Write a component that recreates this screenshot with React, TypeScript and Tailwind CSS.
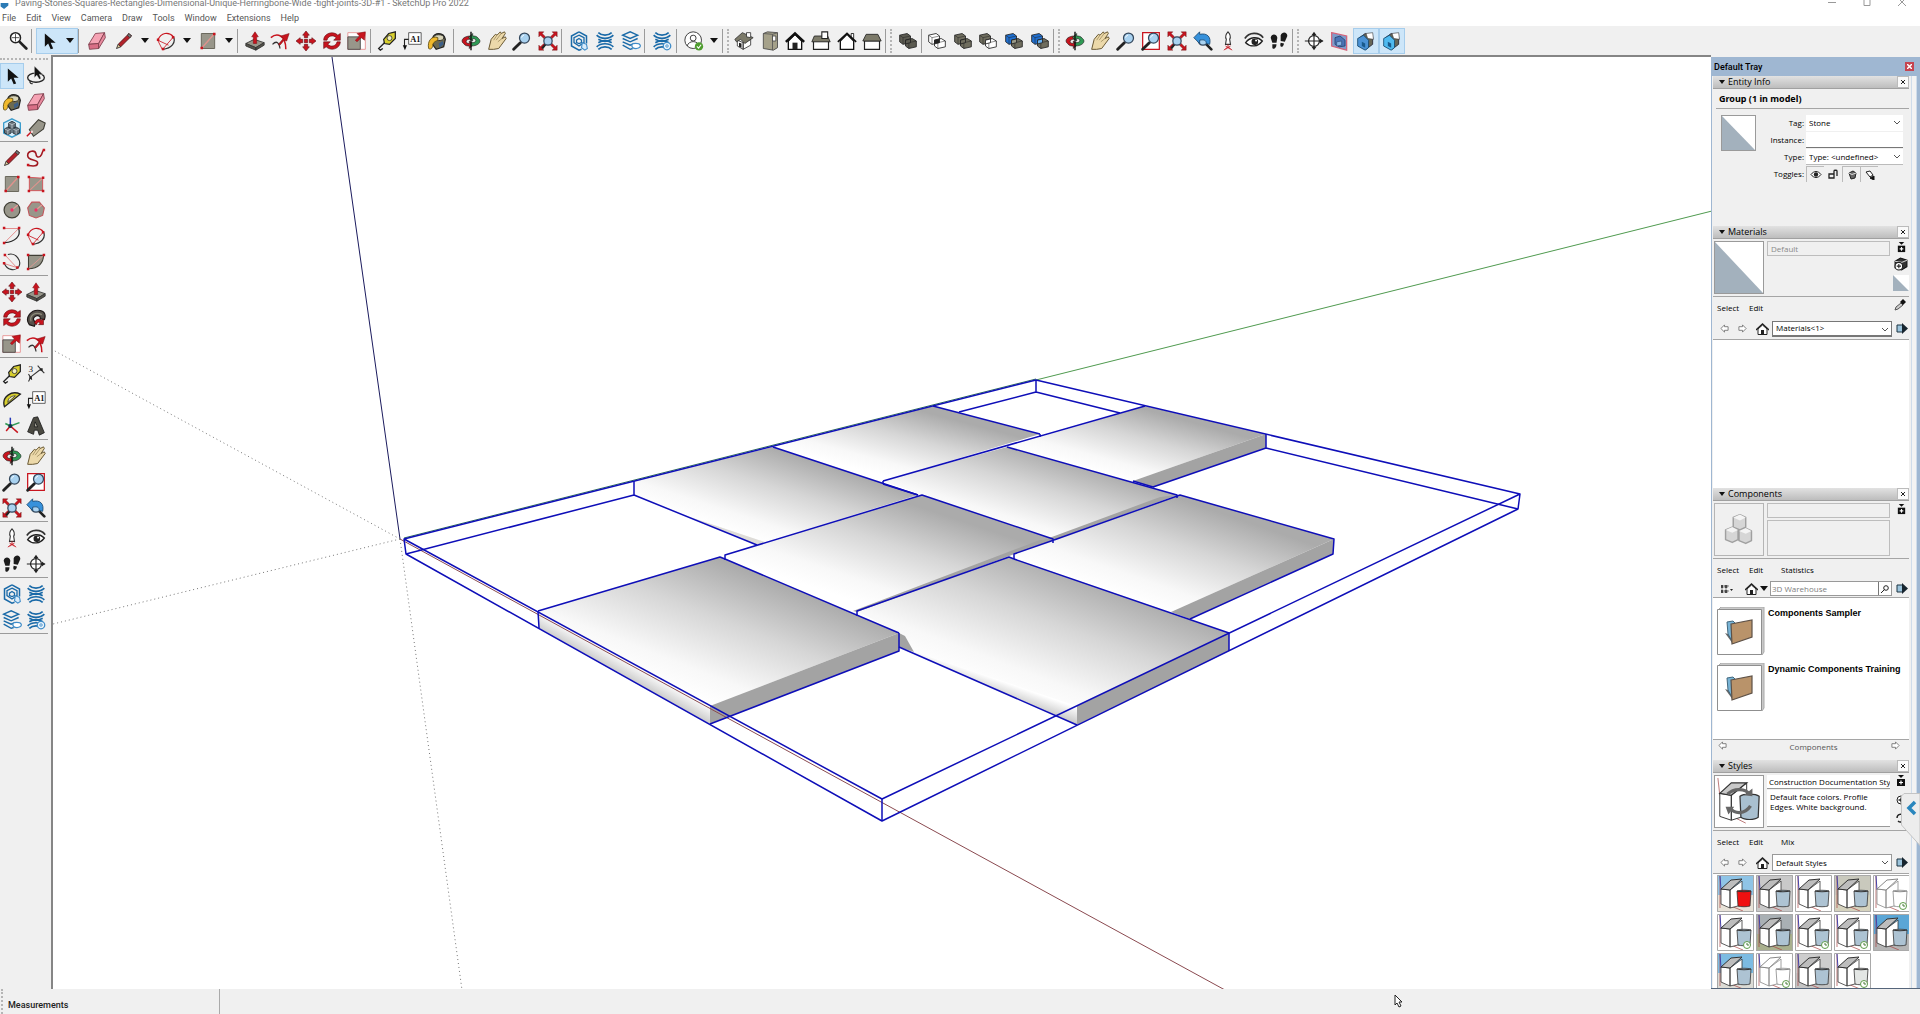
import React from 'react'
import clsx from 'clsx'

const menus = ['File', 'Edit', 'View', 'Camera', 'Draw', 'Tools', 'Window', 'Extensions', 'Help']

const red = '#c8141e'
const stone = '#98968a'
const blue = '#1a6aa8'

const lens = (
  <>
    <path d="M2 22L10 14" stroke="#222" strokeWidth="3.4" strokeLinecap="round" />
    <circle cx="15" cy="8.500" r="6" fill="#a9d2f0" stroke="#33475c" strokeWidth="1.500" />
    <path d="M11.500 8a3.500 3.500 0 013-3" stroke="#fff" fill="none" />
  </>
)

const waves = (
  <path
    d="M4 2c4 4 12 4 16 0M2 5c5 5 15 5 20 0M4 10c5 3 11 3 16 0M4 14c5-3 11-3 16 0M2 19c5-5 15-5 20 0M4 22c4-4 12-4 16 0"
    fill="none"
    stroke={blue}
    strokeWidth="2"
  />
)

const gear = (
  <>
    <circle cx="18" cy="18" r="4.500" fill="#eaf4fc" stroke="#3f8cc8" strokeWidth="1.500" />
    <circle cx="18" cy="18" r="1.500" fill="none" stroke="#3f8cc8" />
  </>
)

const corners = (
  <path
    d="M1 1h6L5 3l4 4-2 2-4-4-2 2zM23 1h-6l2 2-4 4 2 2 4-4 2 2zM1 23h6l-2-2 4-4-2-2-4 4-2-2zM23 23h-6l2-2-4-4 2-2 4 4 2-2z"
    fill={red}
    stroke="#5a1010"
    strokeWidth=".5"
  />
)

function solids(a: string, b: string, mid: string) {
  return (
    <>
      <path d="M2 5l9-2 4 3v8l-9 2-4-3z" fill={a} stroke="#222" />
      <path d="M2 5l4 3 9-2M6 8v8" stroke="#222" strokeWidth=".6" />
      <path d="M9 11l8-2 5 3v7l-9 2-4-3z" fill={b} stroke="#222" />
      <path d="M9 11l4 3 9-2M13 14v7" stroke="#222" strokeWidth=".6" />
      <path d="M9 11l6-1.500V14l-6 1.500z" fill={mid} stroke="#222" />
    </>
  )
}

function sectionHouse(fill: string) {
  return (
    <>
      <path d="M3 9l8-6 9 4v9l-8 6-9-4z" fill="#666657" stroke="#223" />
      <path d="M12 3l8-1 1 8-7-1z" fill="#fff" stroke="#333" strokeWidth=".7" />
      <path d="M2 9l7-4 6 6v9l-4 3-9-5z" fill={fill} stroke="#164a70" />
      <path d="M7 13l4 2v5l-4-2z" fill="#195a8c" />
    </>
  )
}

const icons: Record<string, React.ReactNode> = {
  search: (
    <>
      <circle cx="9" cy="8" r="6" fill="#fff" stroke="#222" strokeWidth="1.800" />
      <path d="M9 3.500v9M4.500 8h9" stroke="#222" strokeWidth=".9" />
      <path d="M14 13l8 8" stroke="#222" strokeWidth="3.200" strokeLinecap="round" />
    </>
  ),
  select: <path d="M7 3v16l4-4 3 7 3-1-3-7h6z" fill="#111" />,
  lasso: (
    <>
      <ellipse cx="12" cy="14" rx="10" ry="5.500" fill="none" stroke="#222" strokeWidth="1.600" />
      <path d="M5 18c-1 2 1 4 3 3" fill="none" stroke="#222" strokeWidth="1.400" />
      <path d="M10 0v14l3-3 3 5 2-1-2-5h4z" fill="#111" stroke="#f0f0f0" strokeWidth=".5" />
    </>
  ),
  eraser: (
    <>
      <path d="M2 16L10 3l11-1-7 13z" fill="#f5a3b4" stroke="#7b3a48" />
      <path d="M2 16l12-1v6L3 22z" fill="#d96f86" stroke="#7b3a48" />
      <path d="M14 15l7-13 1 6-8 13z" fill="#e88a9e" stroke="#7b3a48" />
    </>
  ),
  pencil: (
    <>
      <path d="M5 16L18 3l3 3L8 19z" fill="#b3222a" stroke="#4e0d10" />
      <path d="M5 16l3 3-5 2z" fill="#e9cd9c" stroke="#222" />
      <path d="M16 5l2-2 3 3-2 2z" fill="#777" stroke="#333" />
    </>
  ),
  arc: (
    <>
      <path d="M2 11C6 2 15 0 21 7" fill="none" stroke={red} strokeWidth="1.400" />
      <path d="M2 11l6 12M21 7L8 22M2 11l13 6" stroke={red} fill="none" />
      <path d="M21 7c3 7-2 14-13 15" fill="none" stroke="#333" strokeWidth="1.500" />
      <path d="M1 9h3v3H1zM19 6h3v3h-3zM7 20h3v3H7z" fill={red} />
    </>
  ),
  rect: (
    <>
      <path d="M4 3h16v18H4z" fill={stone} stroke="#6b695d" strokeWidth="1.200" />
      <path d="M4 21L20 3" stroke="#e0938d" strokeWidth="1.600" />
      <path d="M3 19h3v3H3zM18 2h3v3h-3z" fill={red} />
    </>
  ),
  rotRect: (
    <>
      <path d="M4 4l16 1v15H4z" fill={stone} stroke="#d8444c" />
      <path d="M4 20L20 5" stroke="#e0938d" strokeWidth="1.300" />
      <path d="M2 2h3v3H2zM19 3h3v3h-3zM2 19h3v3H2zM19 19h3v3h-3z" fill={red} />
    </>
  ),
  circle: (
    <>
      <circle cx="12" cy="12" r="9.500" fill={stone} stroke="#403f36" strokeWidth="1.500" />
      <path d="M12 12l7-6" stroke="#e49a94" strokeWidth="1.500" />
      <circle cx="12" cy="12" r="2" fill="#e36" />
    </>
  ),
  polygon: (
    <>
      <path d="M7 2.500h9l6 7-2 9-8 3-8-3-2-9z" fill={stone} stroke="#c2555b" strokeWidth="1.300" />
      <path d="M12 12l7-6" stroke="#e49a94" strokeWidth="1.500" />
      <circle cx="12" cy="12" r="2" fill="#e36" />
    </>
  ),
  arc2: (
    <>
      <path d="M20 3c3 9-4 16-17 17" fill="none" stroke="#222" strokeWidth="1.500" />
      <path d="M3 3h17M20 3L3 20" stroke="#e07a7a" fill="none" />
      <path d="M1 1h3v3H1zM19 1h3v3h-3zM1 19h3v3H1z" fill={red} />
    </>
  ),
  arc3: (
    <>
      <path d="M7 3c10-3 17 8 13 15-5 6-14 3-17-4" fill="none" stroke="#333" strokeWidth="1.400" />
      <path d="M4 4l13 14M3 14l16 5" stroke="#e07a7a" fill="none" />
      <path d="M2 2h3v3H2zM17 17h3v3h-3zM1 12h3v3H1z" fill={red} />
    </>
  ),
  pie: (
    <>
      <path d="M3 4h18c0 9-6 16-18 16z" fill={stone} stroke="#403f36" strokeWidth="1.300" />
      <path d="M3 20L21 4" stroke="#e49a94" />
      <path d="M1 2h3v3H1zM20 2h3v3h-3zM1 19h3v3H1z" fill={red} />
    </>
  ),
  freehand: (
    <>
      <path
        d="M3 21c6 1 11 1 11-3 0-5-12-2-12-9 0-6 9-7 10-2 0 3 2 5 5 3 4-3 1-6 5-8"
        fill="none"
        stroke="#a01820"
        strokeWidth="1.900"
      />
      <path d="M1 19h3v3H1zM20 1h3v3h-3z" fill={red} />
    </>
  ),
  push: (
    <>
      <path d="M1 15l10-5 12 4-10 6z" fill={stone} stroke="#333" />
      <path d="M1 15v3l12 5v-3zM13 20v3l10-6v-3z" fill="#55534a" stroke="#333" />
      <path d="M12 1l4 6h-2v8h-4V7H8z" fill={red} stroke="#7a0d12" strokeWidth=".6" />
    </>
  ),
  offset: (
    <>
      <path d="M1 8C8 2 19 4 19 22" fill="none" stroke={red} strokeWidth="1.800" />
      <path d="M3 16c5-5 8-2 9 5" fill="none" stroke="#333" strokeWidth="1.500" />
      <path d="M10 16l6-7-3-3 10-3-3 9-3-1-5 6z" fill={red} stroke="#7a0d12" strokeWidth=".6" />
    </>
  ),
  move: (
    <path
      d="M12 0l4 5h-2v3h-4V5H8zM12 24l4-5h-2v-3h-4v3H8zM0 12l5-4v2h3v4H5v2zM24 12l-5-4v2h-3v4h3v2zM10 10h4v4h-4z"
      fill={red}
      stroke="#5e0b10"
      strokeWidth=".7"
    />
  ),
  rotate: (
    <path
      d="M2 11C2 3 13-1 19 5l3-2v8h-8l3-3c-4-4-10-2-11 3zM22 13c0 8-11 12-17 6l-3 2v-8h8l-3 3c4 4 10 2 11-3z"
      fill={red}
      stroke="#5e0b10"
      strokeWidth=".7"
    />
  ),
  scale: (
    <>
      <path d="M1 2h21v20H1z" fill="#fff" stroke="#e58a8a" />
      <path d="M1 7h15v15H1z" fill={stone} stroke="#444" />
      <path d="M10 11l5-5-3-3 10-2-1 10-4-3-5 5z" fill={red} stroke="#7a0d12" strokeWidth=".6" />
    </>
  ),
  tape: (
    <>
      <path d="M8 10l6-7 8-2v8l-7 7-6-1z" fill="#d8cf2e" stroke="#222" strokeWidth="1.500" />
      <circle cx="15" cy="8.500" r="3" fill="#f3f0bc" stroke="#333" />
      <path d="M9 14l-7 7 2 2 3-2" fill="none" stroke="#222" strokeWidth="1.600" />
    </>
  ),
  text: (
    <>
      <path d="M8 2h15v14H8z" fill="#fff" stroke="#444" />
      <text x="10" y="13" fontSize="10" fontFamily="Liberation Serif, serif" fontWeight="700" fill="#111">
        A1
      </text>
      <path d="M8 10H3v9" fill="none" stroke="#222" strokeWidth="1.300" />
      <path d="M1 17h5l-2.500 6z" fill="#111" />
    </>
  ),
  paint: (
    <>
      <path d="M7 8c1-6 13-8 15 2l-2 9-9 3-5-7z" fill="#6d6a50" stroke="#222" strokeWidth="1.500" />
      <ellipse cx="14" cy="8" rx="6" ry="3.500" fill="#d8d4b8" stroke="#222" />
      <path d="M13 8C6 5 0 12 2 21c3 2 5-1 5-5 1-3 4-4 6-5z" fill="#f0b92d" stroke="#5b4a12" />
      <path d="M14 15l5-3 1 4-5 4z" fill="#3d5f88" />
    </>
  ),
  orbit: (
    <>
      <path
        d="M12 6C2 6-1 12 3 15c2 3 5 3 7 3v3l5-5-5-4v3c-3 0-5-2-3-4 1-1 3-1 5-1z"
        fill={red}
        stroke="#222"
        strokeWidth=".8"
      />
      <path
        d="M12 18c10 0 13-6 9-9-2-3-5-3-7-3V3L9 8l5 4V9c3 0 5 2 3 4-1 1-3 1-5 1z"
        fill="#2f9a55"
        stroke="#222"
        strokeWidth=".8"
      />
      <path d="M12 1v22" stroke="#111" strokeWidth="1.700" />
    </>
  ),
  pan: (
    <>
      <path
        d="M2 22l3-12 5-6 2 1 4-4 1 2 4-2 1 2-4 6 4-2 1 2-6 8-3 4-6 1z"
        fill="#ecd9aa"
        stroke="#6a5a35"
        strokeWidth="1.200"
        strokeLinejoin="round"
      />
      <path d="M12 5l-4 6M17 3l-6 8M18 9l-5 4" stroke="#8f7d50" strokeWidth=".8" />
    </>
  ),
  zoom: lens,
  zoomWindow: (
    <>
      <path d="M2 2h20v20H2z" fill="#fff" stroke={red} strokeWidth="1.500" />
      {lens}
    </>
  ),
  extents: (
    <>
      {corners}
      <path d="M5 21l4-5" stroke="#222" strokeWidth="2.500" />
      <circle cx="12" cy="12" r="5" fill="#a9d2f0" stroke="#33475c" strokeWidth="1.500" />
    </>
  ),
  previous: (
    <>
      <path d="M14 14l8 8" stroke="#222" strokeWidth="3.200" strokeLinecap="round" />
      <circle cx="12" cy="11" r="6" fill="#a9d2f0" stroke="#33475c" strokeWidth="1.500" />
      <path d="M1 8l7-7v3c9-2 14 3 12 12l-4-1c0-4-3-5-8-4v4z" fill="#3691db" stroke="#17466f" />
    </>
  ),
  warehouse: (
    <>
      <path d="M12 1l9 5v9M15 22l-3 1-9-5V6l9-5" fill="none" stroke={blue} strokeWidth="1.800" />
      <path d="M12 5l6 3v6l-6 4-6-4V8z" fill="none" stroke={blue} strokeWidth="1.600" />
      <path d="M12 9l3 2v3l-3 1-3-1v-3z" fill="none" stroke={blue} strokeWidth="1.500" />
      <path d="M16 14l5 2 1 5-3 2-4-3z" fill="#d8ebfa" stroke="#3f8cc8" strokeWidth="1.300" />
    </>
  ),
  extWarehouse: waves,
  layout: (
    <>
      <path
        d="M2 5l9-4 9 4-9 4zM2 9l9 4 9-4M2 13l9 4 5-2M2 17l9 5 3-1"
        fill="none"
        stroke={blue}
        strokeWidth="1.700"
      />
      <path d="M13 17c0-3 9-3 10 0s-3 4-5 4-5-1-5-4z" fill="#fff" stroke="#3f8cc8" strokeWidth="1.500" />
    </>
  ),
  extManager: (
    <>
      {waves}
      {gear}
    </>
  ),
  user: (
    <>
      <circle cx="11" cy="11" r="10" fill="#fff" stroke="#444" strokeWidth="1.200" />
      <circle cx="11" cy="8.500" r="3.500" fill="none" stroke="#444" strokeWidth="1.200" />
      <path d="M4 18c1-7 13-7 14 0" fill="none" stroke="#444" strokeWidth="1.200" />
      <circle cx="18" cy="18.500" r="5" fill="#4f9d2f" />
      <path d="M15.500 18.500l2 2 3-4" fill="none" stroke="#fff" strokeWidth="1.300" />
    </>
  ),
  iso: (
    <>
      <path d="M4 11l7 3v8l-7-4zM11 14l9-4v7l-9 5z" fill="#fff" stroke="#333" />
      <path d="M1 10l9-8 13 6-10 7-5-5-5 3z" fill="#7c7a69" stroke="#333" />
      <path d="M15 2h5v6l-5-1z" fill="#fff" stroke="#333" />
      <path d="M6 14l3 1v5l-3-1z" fill="#222" />
    </>
  ),
  top: (
    <>
      <path d="M4 3l5-2 12 1v18l-5 3-12-2z" fill="#a5a18a" stroke="#444" />
      <path d="M15 4v19M4 3l11 1 6-2" stroke="#555" fill="none" />
      <path d="M15 6h4v6h-4z" fill="#fff" stroke="#444" />
    </>
  ),
  front: (
    <>
      <path d="M4 12v10h16V12l-8-8z" fill="#fff" stroke="#111" strokeWidth="1.600" />
      <path d="M1 13L12 3l11 10" fill="none" stroke="#111" strokeWidth="3" />
      <path d="M9 14h6v8H9z" fill="#222" />
    </>
  ),
  right: (
    <>
      <path d="M3 12h18v10H3z" fill="#fff" stroke="#222" strokeWidth="1.400" />
      <path d="M4 6h16l3 7H1z" fill="#7c7a69" stroke="#222" />
      <path d="M13 1h7v8h-7z" fill="#fff" stroke="#222" strokeWidth="1.300" />
    </>
  ),
  back: (
    <>
      <path d="M17 3h3v6h-3z" fill="#fff" stroke="#111" />
      <path d="M4 12v10h16V12l-8-8z" fill="#fff" stroke="#111" strokeWidth="1.600" />
      <path d="M1 13L12 3l11 10" fill="none" stroke="#111" strokeWidth="2" />
    </>
  ),
  left: (
    <>
      <path d="M3 12h18v10H3z" fill="#fff" stroke="#222" strokeWidth="1.400" />
      <path d="M5 4h14l4 8H1z" fill="#7c7a69" stroke="#222" />
    </>
  ),
  shell: solids('#5c5b51', '#5c5b51', '#5c5b51'),
  intersect: solids('#fff', '#fff', '#222'),
  union: solids('#6f6d5e', '#6f6d5e', '#6f6d5e'),
  subtract: solids('#6f6d5e', '#fff', '#fff'),
  trim: solids('#1f6fd0', '#6f6d5e', '#9a9a88'),
  split: solids('#1f6fd0', '#6f6d5e', '#68b2f2'),
  position: (
    <>
      <path d="M12 1c-3 3-3 7-2 9l-1 6h6l-1-6c1-2 1-6-2-9z" fill="#fff" stroke="#333" strokeWidth="1.300" />
      <path d="M12 16v3M7 23l5-4 5 4M9 18l6 4M15 18l-6 4" stroke={red} fill="none" />
    </>
  ),
  look: (
    <>
      <path d="M1 9C6 1 18 1 23 8" fill="none" stroke="#333" strokeWidth="2" />
      <path d="M2 14c5-7 14-8 20-2-5 7-14 8-20 2z" fill="#fff" stroke="#222" strokeWidth="1.600" />
      <circle cx="13" cy="13" r="4" fill="#222" />
      <circle cx="14.500" cy="11.500" r="1.200" fill="#fff" />
    </>
  ),
  walk: (
    <>
      <path d="M2 8c1-5 7-5 8 0l-1 6H4zM4 16h5c0 5-4 7-5 4z" fill="#1b1b1b" />
      <path d="M14 5c2-5 8-4 8 1l-3 7-5-1zM14 14l4 1c-1 6-6 5-4-1z" fill="#1b1b1b" />
    </>
  ),
  section: (
    <>
      <circle cx="12" cy="12" r="6.500" fill="#fff" stroke="#222" strokeWidth="1.500" />
      <path d="M1 12h22M12 5v14" stroke="#222" strokeWidth="1.400" />
      <path d="M9 5l3-4 3 4zM9 19l3 4 3-4zM19 9l4 3-4 3z" fill="#222" />
    </>
  ),
  plane: (
    <>
      <path d="M2 2l18 4v17L2 18z" fill="#7d9ccb" stroke="#d4637a" strokeWidth="1.500" />
      <path d="M6 8l6-2 6 5v7l-7 1-5-3z" fill="#4a74b6" stroke="#27426f" />
      <path d="M8 13l6-1v5l-6 1z" fill="#86b5e4" stroke="#27426f" strokeWidth=".7" />
    </>
  ),
  sectionCut: sectionHouse('#4b93d6'),
  sectionFill: sectionHouse('#4fbaf0'),
  component: (
    <>
      <path d="M12 1l10 5v12l-10 5-10-5V6z" fill="#d9effb" stroke="#3b9ccc" strokeWidth="1.600" />
      <path
        d="M8 6l4-2 4 2v5l-4 2-4-2zM3 13l4-2 4 2v5l-4 2-4-2zM13 13l4-2 4 2v5l-4 2-4-2z"
        fill="#68727a"
        stroke="#1f2a33"
      />
      <path
        d="M8 6l4 2 4-2M3 13l4 2 4-2M13 13l4 2 4-2M12 8v5M7 15v5M17 15v5"
        stroke="#d5dde3"
        strokeWidth=".8"
        fill="none"
      />
    </>
  ),
  tag: (
    <>
      <path d="M4 14L15 2l8 4-2 7-12 9z" fill={stone} stroke="#3d3c33" strokeWidth="1.300" />
      <path d="M1 22l6-6" stroke={red} strokeWidth="1.800" />
      <circle cx="7" cy="16.500" r="1.500" fill="#f0d9d9" />
    </>
  ),
  follow: (
    <>
      <path
        d="M4 20C-2 12 6 1 17 3c6 1 7 6 5 11l-5-1c1-4-4-5-7-2-2 2-1 5 2 6l-2 5z"
        fill="#55504a"
        stroke="#1c1616"
        strokeWidth="1.400"
      />
      <path d="M6 16C4 9 11 4 19 8" fill="none" stroke="#8d8b7a" strokeWidth="1.500" />
      <path d="M10 18c2-5 6-6 9-3l2-2v7h-6l2-2c-2-2-4-1-4 2z" fill={red} stroke="#400" strokeWidth=".6" />
    </>
  ),
  dimension: (
    <>
      <path d="M5 16L18 6M3 12l4 7M14 2l7 8M5 17l-2 4M18 7l4 4" stroke="#333" strokeWidth="1.300" fill="none" />
      <path d="M4 15h3v3H4zM17 5h3v3h-3z" fill="#222" />
      <text x="3" y="10" fontSize="11" fontFamily="Liberation Serif, serif" fill="#222">
        3
      </text>
    </>
  ),
  protractor: (
    <>
      <path d="M3 20C-1 8 12 0 22 5z" fill="#d8cf2e" stroke="#222" strokeWidth="1.600" />
      <path d="M7 15c0-5 4-8 9-8z" fill="#f4f2c8" stroke="#333" />
    </>
  ),
  axes: (
    <>
      <path d="M10 12V2" stroke="#2438b8" strokeWidth="1.800" />
      <path d="M10 12l11-4M10 12l-6-3" stroke="#2f9a55" strokeWidth="1.800" />
      <path d="M10 12l9 8M10 12l-5 6" stroke={red} strokeWidth="1.800" />
      <circle cx="10" cy="12" r="2.500" fill="#134" />
    </>
  ),
  text3d: (
    <>
      <path d="M2 19L9 2l5-1 8 19-6 3-2-6h-4l-1 5z" fill="#4b4a42" stroke="#1b1b1b" />
      <path d="M10 13l1-6 3 6z" fill="#b5b3a4" stroke="#1b1b1b" />
    </>
  ),
}

function Icon({ name, className = 'size-5' }: { name: string; className?: string }) {
  return (
    <svg aria-hidden="true" className={clsx('shrink-0', className)} viewBox="0 0 24 24" fill="none">
      {icons[name]}
    </svg>
  )
}

function ToolButton({ name, active, className }: { name: string; active?: boolean; className?: string }) {
  return (
    <button
      type="button"
      aria-label={name}
      className={clsx(
        'flex h-[26px] items-center justify-center',
        active && 'bg-[#cde6f9] outline outline-1 -outline-offset-1 outline-[#a6cdec]',
        className
      )}
    >
      <Icon name={name} />
    </button>
  )
}

function Caret({ className = 'w-4' }: { className?: string }) {
  return (
    <button
      type="button"
      aria-label="More"
      className={clsx('flex h-[26px] items-center justify-center', className)}
    >
      <svg aria-hidden="true" className="h-[5px] w-2" viewBox="0 0 8 5">
        <path d="M0 0h8L4 5z" fill="#111" />
      </svg>
    </button>
  )
}

function Group({ names, active = [], className }: { names: string[]; active?: string[]; className?: string }) {
  return (
    <div className={clsx('flex h-6 shrink-0 items-center border-[#9b9b9b]', className)}>
      {names.map((name) => (
        <ToolButton key={name} name={name} active={active.includes(name)} className="flex-1" />
      ))}
    </div>
  )
}

function Grip() {
  return <span className="ml-1 h-6 w-1 shrink-0 border-l-2 border-dotted border-[#b5b5b5]" />
}

function Split({ name }: { name: string }) {
  return (
    <div className="flex">
      <ToolButton name={name} className="w-[26px]" />
      <Caret />
    </div>
  )
}

function TopToolbar() {
  return (
    <div className="flex h-[29px] items-center overflow-hidden bg-[#f0f0f0]">
      <Group names={['search']} className="w-8 border-r pl-1" />
      <div className="flex h-6 w-[47px] shrink-0 items-center border-r border-[#9b9b9b] pl-1">
        <div className="flex bg-[#cde6f9] outline outline-1 -outline-offset-1 outline-[#a6cdec]">
          <ToolButton name="select" className="w-[26px]" />
          <Caret />
        </div>
      </div>
      <div className="flex h-6 w-[159px] shrink-0 items-center border-r border-[#9b9b9b] pl-1">
        <ToolButton name="eraser" className="w-7" />
        <Split name="pencil" />
        <Split name="arc" />
        <Split name="rect" />
      </div>
      <Group names={['push', 'offset', 'move', 'rotate', 'scale']} className="w-[133px] border-r pl-1" />
      <Group names={['tape', 'text', 'paint']} className="w-[83px] border-r px-1" />
      <Group names={['orbit', 'pan', 'zoom', 'extents']} className="w-[108px] border-r pl-1" />
      <Group names={['warehouse', 'extWarehouse', 'layout']} className="w-[83px] border-r pl-1" />
      <Group names={['extManager']} className="w-8 border-r pl-0.5" />
      <div className="flex h-6 w-[46px] shrink-0 items-center border-r border-[#9b9b9b] pl-1">
        <ToolButton name="user" className="w-[26px]" />
        <Caret />
      </div>
      <Grip />
      <Group names={['iso', 'top', 'front', 'right', 'back', 'left']} className="w-[155px] border-r" />
      <Grip />
      <Group names={['shell']} className="w-7 border-r" />
      <Group names={['intersect', 'union', 'subtract', 'trim', 'split']} className="w-[132px] border-r pl-0.5" />
      <Grip />
      <Group
        names={['orbit', 'pan', 'zoom', 'zoomWindow', 'extents', 'previous', 'position', 'look', 'walk']}
        className="w-[231px] border-r"
      />
      <Grip />
      <Group
        names={['section', 'plane', 'sectionCut', 'sectionFill']}
        active={['sectionCut', 'sectionFill']}
        className="w-[104px]"
      />
    </div>
  )
}

const sideGroups = [
  ['select', 'lasso', 'paint', 'eraser', 'component', 'tag'],
  ['pencil', 'freehand', 'rect', 'rotRect', 'circle', 'polygon', 'arc2', 'arc', 'arc3', 'pie'],
  ['move', 'push', 'rotate', 'follow', 'scale', 'offset'],
  ['tape', 'dimension', 'protractor', 'text', 'axes', 'text3d'],
  ['orbit', 'pan', 'zoom', 'zoomWindow', 'extents', 'previous'],
  ['position', 'look', 'walk', 'section'],
  ['warehouse', 'extWarehouse', 'layout', 'extManager'],
]

function SideToolbar() {
  return (
    <aside className="w-[51px] shrink-0 bg-[#f0f0f0] pt-[3px]">
      <div className="mb-[3px] w-12 border-t-2 border-dotted border-[#b5b5b5]" />
      {sideGroups.map((group, i) => (
        <div key={i} className="mb-[3px] grid w-12 grid-cols-2 border-b border-[#9b9b9b]">
          {group.map((name) => (
            <ToolButton key={name} name={name} active={name === 'select'} />
          ))}
        </div>
      ))}
    </aside>
  )
}

const tiles = [
  '634,481 773,447 918,495 756,545 634,494',
  '773,447 933,406 1040,434 883,481',
  '1007,447 1145,406 1266,434 1133,481',
  '883,481 1007,447 1177,495 1054,540',
  '725,555 922,495 1053,539 856,611',
  '1014,555 1180,495 1334,539 1171,612',
  '857,611 1009,557 1229,633 1077,706 900,647 914,652 905,636 899,633',
  '538,611 720,557 899,633 710,706',
]

const sides = [
  '1133,481 1266,434 1266,448 1153,487',
  '1171,612 1334,539 1333,554 1190,619',
  '710,706 899,633 899,651 710,724',
  '1077,706 1229,633 1229,651 1077,725',
  '853,611 1040,540 1053,540 857,612',
  '1041,541 1160,497 1177,495 1054,540',
  '899,633 905,636 914,652 899,647',
]

const edges = [
  'M404 539L1036 380L1520 494L1518 509L882 821L406 554L404 539L882 799L1520 494',
  'M882 799V821M1036 380V392M1036 392L959 412M1036 392L1120 413',
  'M406 554L634 495V481M634 495L757 545',
  'M773 447L918 495M933 406L1040 434M1040 434V437M883 481L1145 406',
  'M883 481V484M1007 447L1177 495V498M1266 434V448L1153 487M1266 448L1518 509',
  'M1054 540L1180 495L1334 539L1333 554L1190 619',
  'M725 560V555L922 495L1053 539V543M1014 559V554L1054 540',
  'M725 559L899 633M1014 559L1229 633M883 484L918 495M1133 481L1153 487',
  'M538 611L720 557L725 559M899 633V651L710 724M538 611L539 628',
  'M857 616V611L1009 557L1014 559M1229 633V651M899 647L1077 725',
]

function Viewport() {
  return (
    <main className="min-w-0 flex-1 border-l-2 border-t-2 border-[#858585] bg-white">
      <svg
        role="img"
        aria-label="Paving stones model"
        className="block size-full"
        viewBox="53 57 1658 932"
        preserveAspectRatio="xMinYMin slice"
      >
        <defs>
          <linearGradient id="top" x1="0.25" y1="0.78" x2="0.75" y2="0.25">
            <stop offset="0" stopColor="#ffffff" />
            <stop offset="0.2" stopColor="#f8f8f8" />
            <stop offset="0.6" stopColor="#d6d6d6" />
            <stop offset="1" stopColor="#ababab" />
          </linearGradient>
          <linearGradient id="skirtLeft" gradientUnits="userSpaceOnUse" x1="624" y1="658" x2="614" y2="676">
            <stop offset="0" stopColor="#ffffff" />
            <stop offset="1" stopColor="#bdbdbd" />
          </linearGradient>
          <linearGradient id="skirtRight" gradientUnits="userSpaceOnUse" x1="988" y1="676" x2="982" y2="693">
            <stop offset="0" stopColor="#ffffff" />
            <stop offset="1" stopColor="#c0c0c0" />
          </linearGradient>
        </defs>
        <path d="M400 539L332 57" stroke="#1b1b5e" />
        <path d="M1036 380L1712 211" stroke="#4f9a4f" />
        <path d="M400 539L53 350M400 539L53 624M400 539L462 990" stroke="#777" strokeDasharray="1 3" />
        <polygon points="539,611 710,706 710,724 539,628" fill="url(#skirtLeft)" />
        <polygon points="900,647 1077,706 1077,725" fill="url(#skirtRight)" />
        {tiles.map((points) => (
          <polygon key={points} points={points} fill="url(#top)" />
        ))}
        <polygon points="690,517 765,542 757,545" fill="#dedcd8" />
        {sides.map((points) => (
          <polygon key={points} points={points} fill="#a3a3a3" />
        ))}
        <path d="M400 539L1225 990" stroke="#8a4a50" />
        <path d="M404 538L1036 379" stroke="#2b6a5a" />
        {edges.map((d) => (
          <path key={d} d={d} fill="none" stroke="#0e0eb8" strokeWidth="1.500" strokeLinejoin="round" />
        ))}
      </svg>
    </main>
  )
}

function SectionHeader({ title }: { title: string }) {
  return (
    <div className="flex h-[13px] shrink-0 items-center justify-between border-b border-[#a0a0a0] bg-linear-to-b from-[#e2e2e2] to-[#bdbdbd] pl-1.5">
      <h2 className="flex items-center gap-[3px] text-[9px] leading-3 text-black">
        <svg aria-hidden="true" className="h-1 w-1.5" viewBox="0 0 6 4">
          <path d="M0 0h6L3 4z" fill="#111" />
        </svg>
        {title}
      </h2>
      <button
        type="button"
        aria-label={`Close ${title}`}
        className="flex h-3 w-3 items-center justify-center border border-[#bbb] bg-[#fafafa]"
      >
        <svg aria-hidden="true" className="size-1" viewBox="0 0 4 4">
          <path d="M0 0l4 4M4 0L0 4" stroke="#222" />
        </svg>
      </button>
    </div>
  )
}

function Swatch({ className }: { className?: string }) {
  return (
    <svg aria-hidden="true" className={className} viewBox="0 0 10 10" preserveAspectRatio="none">
      <path d="M0 0h10v10H0z" fill="#fff" />
      <path d="M0 0l10 10H0z" fill="#a3b1bd" />
    </svg>
  )
}

function Select({ label, value, className }: { label: string; value: string; className?: string }) {
  return (
    <div className={clsx('relative flex bg-white', className)}>
      <select
        id={label}
        aria-label={label}
        className="h-full w-full appearance-none pl-[3px] pr-3 text-[8px] leading-3 text-black"
      >
        <option>{value}</option>
      </select>
      <svg
        aria-hidden="true"
        className="pointer-events-none absolute right-[3px] top-1.5 h-1 w-1.5"
        viewBox="0 0 6 4"
      >
        <path d="M0 0l3 3 3-3" fill="none" stroke="#555" />
      </svg>
    </div>
  )
}

function Tabs({ names }: { names: string[] }) {
  return (
    <div className="flex h-[22px] shrink-0 items-center border-t border-[#a5a5a5] pl-1 text-[8px] leading-3 text-black">
      {names.map((name) => (
        <button key={name} type="button" className="h-4 w-8 text-left">
          {name}
        </button>
      ))}
    </div>
  )
}

function Arrow({ flip }: { flip?: boolean }) {
  return (
    <button
      type="button"
      aria-label={flip ? 'Forward' : 'Back'}
      className="w-[18px]"
    >
      <svg aria-hidden="true" className={clsx('size-[9px]', flip && 'rotate-180')} viewBox="0 0 10 10">
        <path d="M5 1L1 5l4 4V7h4V3H5z" fill="#fff" stroke="#777" />
      </svg>
    </button>
  )
}

function Home() {
  return (
    <button type="button" aria-label="Home">
      <svg aria-hidden="true" className="h-3 w-[13px]" viewBox="0 0 13 12">
        <path d="M2 6v5.500h9V6L6.500 2z" fill="#fff" stroke="#222" />
        <path d="M0 7l6.500-6L13 7" fill="none" stroke="#222" strokeWidth="1.300" />
        <path d="M5 7h3v5H5z" fill="#222" />
      </svg>
    </button>
  )
}

function Details() {
  return (
    <button type="button" aria-label="Details">
      <svg aria-hidden="true" className="h-[11px] w-3" viewBox="0 0 12 11">
        <path d="M1 2h6v7H1z" fill="#9cc4dc" stroke="#1c3442" />
        <path d="M6 0l6 5.500L6 11z" fill="#16242e" />
      </svg>
    </button>
  )
}

function Monitor({ className = 'size-[11px]' }: { className?: string }) {
  return (
    <svg aria-hidden="true" className={className} viewBox="0 0 10 12">
      <path d="M2 0h6L5 3z" fill="#111" />
      <path d="M1 4h8v7H1z" fill="#111" />
      <path d="M5 5.500v4M3 7.500h4" stroke="#fff" strokeWidth="1.200" />
    </svg>
  )
}

function EntityInfo() {
  return (
    <section>
      <SectionHeader title="Entity Info" />
      <div className="h-[137px] pl-[3px]">
        <h3 className="h-5 border-b border-[#a5a5a5] pl-[3px] font-['Noto_Sans',sans-serif] text-[9px] font-bold leading-[19px] text-black">
          Group (1 in model)
        </h3>
        <div className="flex items-start justify-between pl-[5px] pr-1.5 pt-1.5">
          <Swatch className="h-9 w-[35px] border border-[#9a9a9a]" />
          <div className="grid grid-cols-[auto_97px] items-center gap-x-0.5 gap-y-px text-right text-[8px] leading-3 text-black">
            <label htmlFor="Tag">Tag:</label>
            <Select label="Tag" value="Stone" className="h-4" />
            <label htmlFor="instance">Instance:</label>
            <input id="instance" className="h-4 w-full border-b border-[#777] bg-white px-1" />
            <label htmlFor="Type">Type:</label>
            <Select label="Type" value="Type: <undefined>" className="h-4 border-b border-[#bbb]" />
            <span>Toggles:</span>
            <div className="flex h-4 items-center">
              <button
                type="button"
                aria-label="Visible"
                className="flex h-4 w-[18px] items-center justify-center border-l border-t border-[#bbb]"
              >
                <svg aria-hidden="true" className="h-[9px] w-3" viewBox="0 0 12 9">
                  <path d="M1 4.500c3-4 7-4 10 0-3 4-7 4-10 0z" fill="#fff" stroke="#222" />
                  <circle cx="6" cy="4.500" r="2.200" fill="#222" />
                </svg>
              </button>
              <button type="button" aria-label="Locked" className="flex h-4 w-[18px] items-center justify-center">
                <svg aria-hidden="true" className="size-2.5" viewBox="0 0 10 10">
                  <path d="M1 5h5v4H1zM6 5V2c0-1 3-1 3 0v5" fill="none" stroke="#222" strokeWidth="1.300" />
                </svg>
              </button>
              <button
                type="button"
                aria-label="Receive shadows"
                className="flex h-4 w-[18px] items-center justify-center border-l border-t border-[#bbb]"
              >
                <svg aria-hidden="true" className="size-2.5" viewBox="0 0 10 10">
                  <path d="M2 3l4-2 3 2-1 5-4 1z" fill="#666" stroke="#222" />
                  <path d="M2 3l3 1.500L9 3" fill="none" stroke="#ddd" />
                </svg>
              </button>
              <button
                type="button"
                aria-label="Cast shadows"
                className="flex h-4 w-[18px] items-center justify-center border-l border-t border-[#bbb]"
              >
                <svg aria-hidden="true" className="size-2.5" viewBox="0 0 10 10">
                  <path d="M1 2l4-1 3 4-3 2z" fill="#fff" stroke="#222" />
                  <path d="M5 8l4-2v4z" fill="#111" stroke="#111" />
                </svg>
              </button>
            </div>
          </div>
        </div>
      </div>
    </section>
  )
}

function Materials() {
  return (
    <section className="flex min-h-0 flex-1 flex-col">
      <SectionHeader title="Materials" />
      <div className="flex h-[57px] shrink-0 gap-[3px] pl-px pt-0.5">
        <Swatch className="h-[53px] w-[50px] shrink-0 border border-[#9a9a9a]" />
        <input
          aria-label="Material name"
          defaultValue="Default"
          className="h-[15px] min-w-0 flex-1 border border-[#bdbdbd] bg-[#f0f0f0] px-[3px] text-[8px] text-[#8a8a8a]"
        />
        <div className="flex w-4 shrink-0 flex-col items-center gap-1 pt-px">
          <Monitor />
          <svg aria-hidden="true" className="size-[14px] shrink-0" viewBox="0 0 13 13">
            <path d="M1 4l5-3 6 2v6l-5 3-6-2z" fill="#333" stroke="#111" />
            <path d="M1 4l6 1 5-2" fill="none" stroke="#ccc" />
            <circle cx="4.500" cy="8.500" r="3.500" fill="#fff" stroke="#222" />
            <path d="M4.500 6.500v4M2.500 8.500h4" stroke="#222" />
          </svg>
          <Swatch className="h-4 w-4 shrink-0" />
        </div>
      </div>
      <div className="relative">
        <Tabs names={['Select', 'Edit']} />
        <svg aria-hidden="true" className="absolute right-[3px] top-[3px] size-3" viewBox="0 0 12 12">
          <path d="M1 11l1-3 5-4 2 2-5 4z" fill="#ccc" stroke="#555" />
          <path d="M6 3l3-3 3 3-3 3z" fill="#111" />
        </svg>
      </div>
      <div className="flex h-[22px] shrink-0 items-center border-b border-[#a5a5a5] pl-[7px] pr-px">
        <Arrow />
        <Arrow flip />
        <Home />
        <Select
          label="Material library"
          value="Materials<1>"
          className="ml-[3px] mr-1 h-4 flex-1 border border-b-2 border-[#777]"
        />
        <Details />
      </div>
      <div className="min-h-0 flex-1 bg-white" />
    </section>
  )
}

function FolderThumb() {
  return (
    <svg aria-hidden="true" className="h-12 w-12 shrink-0" viewBox="0 0 48 48">
      <path d="M1 3l3-3h43v45l-2 3z" fill="#c9c9c9" stroke="#aaa" />
      <path d="M.5 2.500h44v45H.5z" fill="#fff" stroke="#8f8f8f" />
      <path d="M8 26l8 3v8z" fill="#666" />
      <path d="M10 15l6-1 3 3-3 19-5-9z" fill="#78b4d6" stroke="#41677d" />
      <path d="M14 17l21-4v17l-20 7z" fill="#b9936a" stroke="#5d5147" strokeWidth="1.200" />
    </svg>
  )
}

function Components() {
  return (
    <section className="shrink-0">
      <SectionHeader title="Components" />
      <div className="flex h-[57px] gap-[3px] pl-px pt-0.5">
        <svg aria-hidden="true" className="h-[53px] w-[50px] shrink-0 border border-[#b5b5b5]" viewBox="0 0 50 53">
          <g fill="#d6d6d6" stroke="#a0a0a0" strokeWidth="1.500" strokeLinejoin="round">
            <path d="M19 14l7-3 6 3v10l-6 3-7-3zM11 27l7-3 6 3v10l-6 3-7-3zM25 28l7-3 6 3v10l-6 3-7-3z" />
          </g>
          <path d="M19 14l7-3 6 3-6 3zM11 27l7-3 6 3-6 3zM25 28l7-3 6 3-6 3z" fill="#f4f4f4" />
        </svg>
        <div className="flex min-w-0 flex-1 flex-col gap-0.5">
          <input aria-label="Component name" className="h-[15px] w-full border border-[#bdbdbd]" />
          <textarea aria-label="Component description" className="h-9 w-full resize-none border border-[#bdbdbd]" />
        </div>
        <div className="flex w-4 shrink-0 justify-center pt-px">
          <Monitor />
        </div>
      </div>
      <Tabs names={['Select', 'Edit', 'Statistics']} />
      <div className="flex h-[18px] items-center border-b border-[#a5a5a5] pl-2 pr-px">
        <button type="button" aria-label="View options" className="w-6">
          <svg aria-hidden="true" className="h-2 w-3" viewBox="0 0 12 8">
            <path
              d="M0 0h2v3H0zM4 0h2v3H4zM0 5h2v3H0zM4 5h2v3H4zM3 1h5M3 6h5"
              fill="#333"
              stroke="#555"
              strokeWidth=".7"
            />
            <path d="M9 4h3l-1.500 2z" fill="#222" />
          </svg>
        </button>
        <Home />
        <Caret className="w-3" />
        <div className="flex h-[15px] min-w-0 flex-1 border border-[#999] bg-white">
          <input
            aria-label="Search 3D Warehouse"
            placeholder="3D Warehouse"
            className="min-w-0 flex-1 px-px text-[8px] placeholder:text-[#808080]"
          />
          <button
            type="button"
            aria-label="Search"
            className="flex w-[13px] items-center justify-center border-l border-[#777]"
          >
            <svg aria-hidden="true" className="size-2" viewBox="0 0 8 8">
              <circle cx="5" cy="3" r="2.300" fill="none" stroke="#222" />
              <path d="M3.500 4.500L0 8" stroke="#222" />
            </svg>
          </button>
        </div>
        <span className="w-1" />
        <Details />
      </div>
      <ul className="h-[142px] border-b border-[#a5a5a5] bg-white pl-1 pt-[9px]">
        {['Components Sampler', 'Dynamic Components Training'].map((name) => (
          <li key={name} className="mb-2 flex gap-[3px]">
            <FolderThumb />
            <a
              href="#"
              className="whitespace-nowrap font-['Liberation_Sans',Arial,sans-serif] text-[9px] font-bold leading-3 text-black"
            >
              {name}
            </a>
          </li>
        ))}
      </ul>
      <div className="flex h-5 items-start justify-between pl-[5px] pt-px text-[8px] leading-3 text-[#555]">
        <Arrow />
        Components
        <Arrow flip />
      </div>
    </section>
  )
}

type Style = { sky: string; ground: string; face?: string; badge?: boolean; wire?: boolean }

const styleThumbs: Style[] = [
  { sky: '#8fc4e6', ground: '#e8e2d8', face: '#f01010' },
  { sky: '#c9c9c9', ground: '#c9c9c9' },
  { sky: '#ffffff', ground: '#ffffff' },
  { sky: '#c9c9bd', ground: '#d5d2bd' },
  { sky: '#ffffff', ground: '#ffffff', face: '#ffffff', wire: true, badge: true },
  { sky: '#ffffff', ground: '#ffffff', badge: true },
  { sky: '#a9b0b4', ground: '#a9b08e' },
  { sky: '#ffffff', ground: '#ffffff', badge: true },
  { sky: '#ffffff', ground: '#ffffff', badge: true },
  { sky: '#5ba6d6', ground: '#b5b5b5' },
  { sky: '#7cbbe2', ground: '#dcdcd6' },
  { sky: '#ffffff', ground: '#ffffff', face: '#ffffff', wire: true, badge: true },
  { sky: '#cdcdcd', ground: '#c4c4c4' },
  { sky: '#ffffff', ground: '#ffffff', face: '#e3e6e4', badge: true },
]

function StyleThumb({ sky, ground, face = '#adc3d3', badge, wire }: Style) {
  const line = wire ? '#888' : '#333'
  return (
    <svg aria-hidden="true" className="h-[37px] w-[37px]" viewBox="0 0 37 37">
      <path d="M0 0h37v20H0z" fill={sky} />
      <path d="M0 20h37v17H0z" fill={ground} />
      <path d="M3 1v32M14 31l12 5" stroke="#a44" strokeWidth=".7" />
      <path d="M3 1l1 14" stroke="#44a" />
      <path d="M4 14l9 1v18l-9-4zM13 15l12-9v24l-12 3z" fill="#fff" stroke={line} strokeWidth=".8" />
      <path d="M4 14L14 5l11-1-12 11z" fill={wire ? '#fff' : '#bdbdbd'} stroke={line} />
      <path d="M20 16c3-1 11-1 14 0l-1 15c-3 1-9 1-12 0z" fill={face} stroke={line} strokeWidth=".8" />
      <path d="M20 16c3 1 11 1 14 0" fill="none" stroke={line} strokeWidth="1.200" />
      {badge && (
        <>
          <circle cx="30" cy="31" r="3.500" fill="#fff" stroke="#5e9c4a" />
          <path d="M30 29v2h2" fill="none" stroke="#4a7d3a" />
        </>
      )}
      <path d="M.5.5h36v36H.5z" fill="none" stroke="#a9a9a9" />
    </svg>
  )
}

function Styles() {
  return (
    <section className="shrink-0">
      <SectionHeader title="Styles" />
      <div className="flex h-[57px] gap-[3px] pl-px pt-0.5">
        <svg
          aria-hidden="true"
          className="h-[53px] w-[50px] shrink-0 border border-[#999] bg-white"
          viewBox="0 0 50 53"
        >
          <path d="M3 2l2 18M18 42l14 7" stroke="#a55" strokeWidth=".8" />
          <path d="M5 18l12 2v26L5 42zM17 20L33 7v34l-16 5z" fill="#fff" stroke="#333" />
          <path d="M5 18L17 7h16L17 20z" fill="#c9c9c9" stroke="#333" strokeWidth="1.300" />
          <path d="M26 21c4-3 16-3 20 0l-1 22c-4 3-14 3-18 0z" fill="#a9c0d0" stroke="#333" strokeWidth="1.300" />
          <path d="M13 19c7-7 19-6 23 0M37 31c-6 9-16 9-22 2" fill="none" stroke="#666" strokeWidth="3.500" />
          <path d="M30 20l9-7v8zM11 32h9l-6 8z" fill="#666" />
        </svg>
        <div className="flex min-w-0 flex-1 flex-col gap-px text-[8px] leading-[10px] text-black">
          <input
            aria-label="Style name"
            defaultValue="Construction Documentation Sty"
            className="h-3.5 w-full border-b border-[#999] bg-white pl-0.5"
          />
          <textarea
            aria-label="Style description"
            defaultValue={'Default face colors. Profile\nEdges. White background.'}
            className="h-[37px] w-full resize-none overflow-hidden border-b border-[#999] bg-white pl-[3px] pt-0.5"
          />
        </div>
        <div className="flex w-4 shrink-0 flex-col items-center gap-2">
          <Monitor className="size-3" />
          <svg aria-hidden="true" className="size-2.5" viewBox="0 0 10 10">
            <circle cx="5" cy="5" r="4" fill="#fff" stroke="#222" />
            <path d="M5 2.500v5M2.500 5h5" stroke="#222" strokeWidth="1.300" />
          </svg>
          <svg aria-hidden="true" className="size-2.5" viewBox="0 0 10 10">
            <path d="M1 5c0-4 5-5 7-2M9 6c-1 3-5 4-7 2" fill="none" stroke="#222" strokeWidth="1.400" />
          </svg>
        </div>
      </div>
      <Tabs names={['Select', 'Edit', 'Mix']} />
      <div className="flex h-[22px] items-center border-b border-[#a5a5a5] pl-[7px] pr-px">
        <Arrow />
        <Arrow flip />
        <Home />
        <Select
          label="Style library"
          value="Default Styles"
          className="ml-[3px] mr-1 h-[17px] flex-1 border border-[#999]"
        />
        <Details />
      </div>
      <div className="grid h-[114px] grid-cols-[repeat(5,37px)] content-start gap-0.5 overflow-hidden bg-white pl-1 pt-px">
        {styleThumbs.map((thumb, i) => (
          <StyleThumb key={i} {...thumb} />
        ))}
      </div>
    </section>
  )
}

function Tray() {
  return (
    <aside className="relative mt-0.5 flex w-[209px] shrink-0 flex-col border-b border-[#55657a] bg-[#9fb7d2]">
      <header className="flex h-[19px] shrink-0 items-center justify-between pl-[3px] pr-1.5">
        <h1 className="font-[Roboto,sans-serif] text-[9px] font-medium leading-3 text-black">Default Tray</h1>
        <button
          type="button"
          aria-label="Close tray"
          className="flex h-[9px] w-[9px] items-center justify-center bg-[#c64550]"
        >
          <svg aria-hidden="true" className="size-[5px]" viewBox="0 0 5 5">
            <path d="M0 0l5 5M5 0L0 5" stroke="#fff" strokeWidth="1.500" />
          </svg>
        </button>
      </header>
      <div className="mr-[3px] flex min-h-0 flex-1 border-l border-[#9fb7d2] bg-[#f0f0f0]">
        <div className="ml-px flex min-w-0 flex-1 flex-col">
          <EntityInfo />
          <Materials />
          <Components />
          <Styles />
        </div>
        <div className="ml-0.5 w-1.5 border-x border-[#cfdcea] bg-[#f3f3f3]" />
      </div>
      <button type="button" aria-label="Collapse" className="absolute right-0 top-[736px] h-[53px] w-[19px]">
        <svg aria-hidden="true" className="size-full" viewBox="0 0 19 53">
          <path d="M3 .5h16v52L.5 32V3z" fill="#ededed" stroke="#c4c4c4" />
          <path d="M14 9l-6 6 6 6" fill="none" stroke="#2a86bd" strokeWidth="3.500" />
        </svg>
      </button>
    </aside>
  )
}

export default function App() {
  return (
    <div className="flex h-screen flex-col overflow-hidden bg-[#f0f0f0] font-['Open_Sans','Noto_Sans',sans-serif]">
      <header className="bg-white font-[Roboto,sans-serif]">
        <div className="flex h-2.5 items-end justify-between overflow-hidden">
          <div className="flex items-end gap-1.5 text-[9px] leading-[14px] text-[#777]">
            <svg aria-hidden="true" className="h-[7px] w-[9px] self-end pb-px" viewBox="0 3 9 7">
              <path d="M0 0h9v6L4 10 0 7z" fill="#2b7bb5" />
            </svg>
            <span className="whitespace-nowrap">
              Paving-Stones-Squares-Rectangles-Dimensional-Unique-Herringbone-Wide -tight-joints-3D-#1 - SketchUp Pro 2022
            </span>
          </div>
          <div className="flex items-end gap-[27px] pr-3.5 pb-1">
            <button type="button" aria-label="Minimize">
              <svg aria-hidden="true" className="h-1.5 w-2" viewBox="0 0 8 6">
                <path d="M0 2.500h8" stroke="#999" />
              </svg>
            </button>
            <button type="button" aria-label="Maximize">
              <svg aria-hidden="true" className="h-1.5 w-2" viewBox="0 0 8 6">
                <path d="M1 0v5.500h6V0" fill="none" stroke="#999" />
              </svg>
            </button>
            <button type="button" aria-label="Close">
              <svg aria-hidden="true" className="h-1.5 w-2" viewBox="0 0 8 6">
                <path d="M0 6l4-4 4 4M2 0l2 2 2-2" fill="none" stroke="#999" />
              </svg>
            </button>
          </div>
        </div>
        <nav className="flex h-4 items-center gap-2.5 pl-0.5 text-[9px] leading-4 text-[#555]">
          {menus.map((menu) => (
            <button key={menu} type="button">
              {menu}
            </button>
          ))}
        </nav>
      </header>
      <TopToolbar />
      <div className="flex min-h-0 flex-1">
        <SideToolbar />
        <Viewport />
        <Tray />
      </div>
      <footer className="relative flex h-[25px] shrink-0 items-center bg-[#f0f0f0]">
        <label
          htmlFor="measurements"
          className="ml-px h-full w-[63px] border-l-2 border-dotted border-[#b5b5b5] pl-[5px] pt-1.5 font-[Roboto,sans-serif] text-[9px] font-medium leading-5 text-[#222]"
        >
          Measurements
        </label>
        <input id="measurements" className="h-full w-[156px] border-r border-[#aaa] px-1 text-[9px]" />
        <svg aria-hidden="true" className="absolute left-[1394px] top-[5px] h-3.5 w-[9px]" viewBox="0 0 9 14">
          <path d="M1 1v10l2-2 2 4 2-1-2-4h3z" fill="#fff" stroke="#222" />
        </svg>
      </footer>
    </div>
  )
}
